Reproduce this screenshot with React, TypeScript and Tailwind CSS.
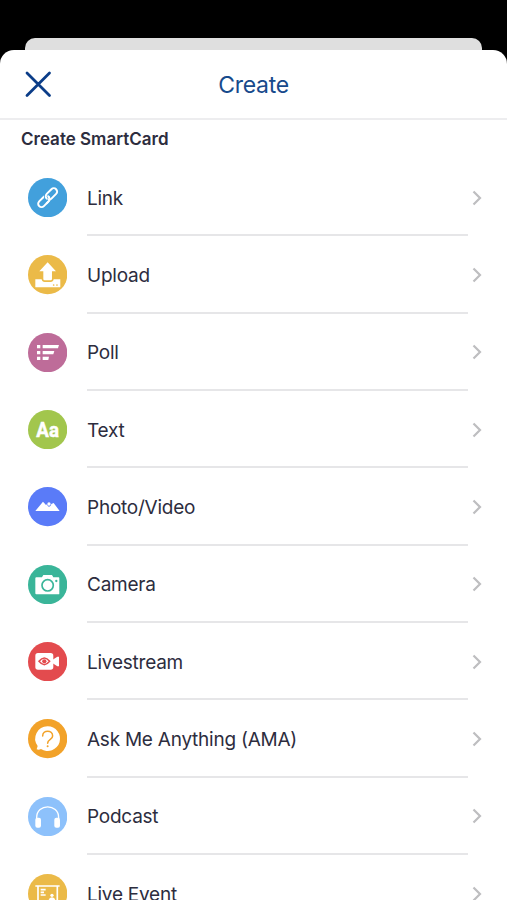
import React from 'react';

interface CardType {
  label: string;
  color: string;
  icon: React.ReactNode;
}

// Glyphs share a 118x118 canvas, the badge circle is drawn by the row
const cardTypes: CardType[] = [
  {
    label: 'Link',
    color: '#42a0dc',
    icon: (
      <g transform="rotate(-45 59 59)" fill="none" strokeLinecap="round">
        <rect x="23" y="49" width="40" height="20" rx="10" stroke="#fff" strokeWidth="6" />
        <path d="M55 59V58a10 10 0 0 1 10-9H85a10 10 0 0 1 0 20H65a10 10 0 0 1-8-4" stroke="#42a0dc" strokeWidth="10" />
        <path d="M55 59a10 10 0 0 1 10-10H85a10 10 0 0 1 0 20H65a10 10 0 0 1-8-4" stroke="#fff" strokeWidth="6" />
        <path d="M63 59a10 10 0 0 1-10 10H45" stroke="#fff" strokeWidth="6" />
      </g>
    ),
  },
  {
    label: 'Upload',
    color: '#ebba48',
    icon: (
      <g fill="#fff">
        <path d="M59 22L84 49H72V72a4 4 0 0 1-4 4H50a4 4 0 0 1-4-4V49H34Z" />
        <path d="M22 73h19c1 6 4 8 9 8h18c5 0 8-2 9-8h20v24H22Z" />
        <circle cx="77" cy="90" r="2.5" fill="#ebba48" />
        <circle cx="87" cy="90" r="2.5" fill="#ebba48" />
      </g>
    ),
  },
  {
    label: 'Poll',
    color: '#be6c99',
    icon: (
      <path
        fill="#fff"
        d="M27 36h10v10H27ZM27 54h10v10H27ZM27 71h10v10H27ZM44 36h49l-3 10H44ZM44 54h35l-3 10H44ZM44 71h19l-2 10H44Z"
      />
    ),
  },
  {
    label: 'Text',
    color: '#a2c64d',
    icon: (
      <text
        x="25"
        y="80"
        fill="#fff"
        stroke="#fff"
        strokeWidth="1.5"
        className="font-['Roboto',sans-serif] text-[62px] font-bold"
        textLength="68"
        lengthAdjust="spacingAndGlyphs"
      >
        Aa
      </text>
    ),
  },
  {
    label: 'Photo/Video',
    color: '#5a7bf8',
    icon: (
      <g fill="#fff">
        <path d="M22 72L45 44L54 54L57 52C59 62 68 61 70 51L77 48L95 72Z" />
        <circle cx="63" cy="51" r="5" />
      </g>
    ),
  },
  {
    label: 'Camera',
    color: '#3ab599',
    icon: (
      <g>
        <path fill="#fff" d="M25 37H42L46 30H72L76 37H92a2 2 0 0 1 2 2V86a2 2 0 0 1-2 2H25a3 3 0 0 1-3-3V40a3 3 0 0 1 3-3Z" />
        <circle cx="59" cy="61" r="17" fill="none" stroke="#3ab599" strokeWidth="5" />
        <circle cx="85" cy="48" r="3.5" fill="#3ab599" />
      </g>
    ),
  },
  {
    label: 'Livestream',
    color: '#e34b4e',
    icon: (
      <g>
        <rect x="22" y="33" width="54" height="50" rx="8" fill="#fff" />
        <path fill="#fff" d="M74 53L88 44H93V73H88L74 64Z" />
        <path d="M33 58Q49 38 65 58Q49 78 33 58Z" fill="none" stroke="#e34b4e" strokeWidth="4.5" />
        <circle cx="49" cy="58" r="6.5" fill="#e34b4e" />
      </g>
    ),
  },
  {
    label: 'Ask Me Anything (AMA)',
    color: '#f2a229',
    icon: (
      <g>
        <path fill="#fff" d="M59 22a37 37 0 1 1-20 68c-4 2-8 3-13 1l3-10A37 37 0 0 1 59 22Z" />
        <path d="M44 51C44 32 74 32 74 51C74 62 59 60 59 73" fill="none" stroke="#f2a229" strokeWidth="4.5" strokeLinecap="round" />
        <circle cx="59" cy="82" r="3" fill="#f2a229" />
      </g>
    ),
  },
  {
    label: 'Podcast',
    color: '#8dc1fb',
    icon: (
      <g>
        <path d="M26 65V62C26 19 92 19 92 62V65" fill="none" stroke="#fff" strokeWidth="4" />
        <rect x="22" y="62" width="17" height="30" rx="6" fill="#fff" />
        <rect x="79" y="62" width="17" height="30" rx="6" fill="#fff" />
      </g>
    ),
  },
  {
    label: 'Live Event',
    color: '#ebba48',
    icon: (
      <g>
        <path d="M22 36H95M30 36V90H88V36M38 47H53M38 55H48M38 63H53" fill="none" stroke="#fff" strokeWidth="5" />
        <circle cx="72" cy="64" r="5" fill="#fff" />
        <path d="M62 90V78Q64 70 72 70Q80 70 82 78V90Z" fill="#fff" />
      </g>
    ),
  },
];

export default function App() {
  return (
    <div className="h-[900px] w-full overflow-hidden bg-black pt-[38px] font-['Inter',sans-serif] text-[#2d2d3e]">
      {/* Edge of the screen behind the sheet */}
      <div className="mx-[25px] h-3 rounded-t-[10px] bg-[#dfdfdf]" />

      <div className="h-[850px] overflow-hidden rounded-t-[14px] bg-white">
        <header className="grid h-[70px] grid-cols-[1fr_auto_1fr] items-center border-b-2 border-[#ededef]">
          <button className="ml-[25px] w-[27px]" aria-label="Close">
            <svg viewBox="0 0 27 27" className="block size-[27px]" fill="none" stroke="#0b3d88" strokeWidth="2.8" strokeLinecap="round">
              <path d="M2 2L24.5 24.5M24.5 2L2 24.5" />
            </svg>
          </button>
          <h1 className="pt-0.5 text-[23px] tracking-[-0.3px] text-[#174a8c]">Create</h1>
        </header>

        <h2 className="h-[39px] pl-[21px] pt-[7px] text-[17px] leading-6 font-semibold">Create SmartCard</h2>

        <ul>
          {cardTypes.map((card) => (
            <CardRow key={card.label} card={card} />
          ))}
        </ul>
      </div>
    </div>
  );
}

function CardRow({ card }: { card: CardType }) {
  return (
    <li className="flex h-[77.35px] items-stretch pl-7">
      <div className="flex w-[59px] items-center">
        <svg viewBox="0 0 118 118" className="size-[39.3px]">
          <circle cx="59" cy="59" r="59" fill={card.color} />
          {card.icon}
        </svg>
      </div>
      <div className="flex w-[381px] items-center border-b-2 border-[#e6e6e8] pt-1">
        <span className="text-[19px] leading-6 tracking-[-0.24px]">{card.label}</span>
      </div>
      <div className="flex items-center pl-1">
        <svg viewBox="0 0 10 16" className="h-4 w-2.5" fill="none" stroke="#bebec0" strokeWidth="2.2">
          <path d="M1.5 1.5L8 8L1.5 14.5" />
        </svg>
      </div>
    </li>
  );
}
